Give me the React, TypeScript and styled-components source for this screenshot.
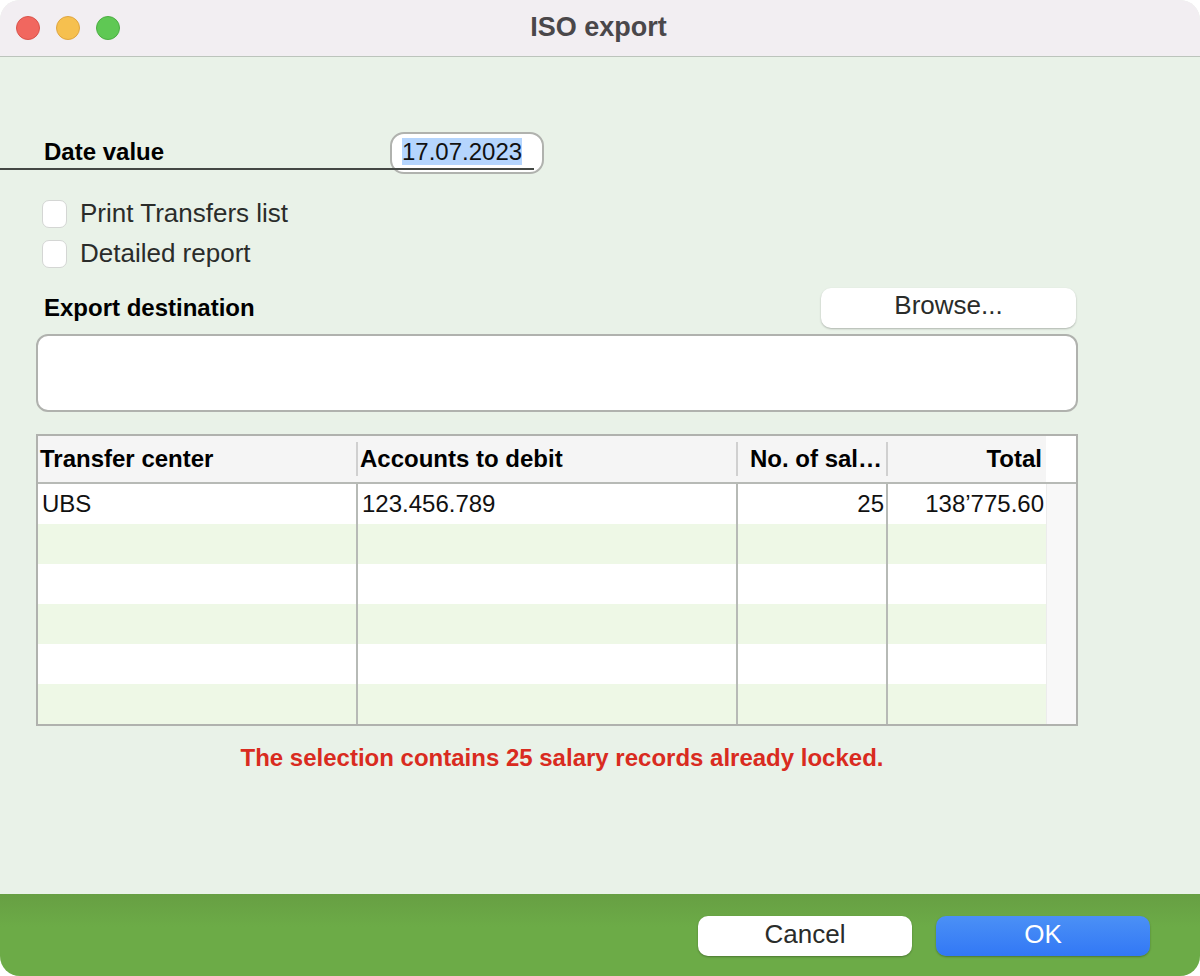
import React from "react";
import styled, { createGlobalStyle } from "styled-components";

const Global = createGlobalStyle`
  html, body { margin: 0; padding: 0; background: #fff; }
  body { font-family: "Liberation Sans", Arial, sans-serif; }
`;

const Win = styled.div`
  width: 1200px;
  height: 976px;
  display: flex;
  flex-direction: column;
  border-radius: 20px;
  overflow: hidden;
  background: #e9f2e8;
`;

const TitleBar = styled.header`
  height: 56px;
  flex: none;
  display: flex;
  align-items: center;
  position: relative;
  padding-left: 16px;
  gap: 16px;
  background: #f2eef2;
  border-bottom: 1px solid #bcc4bc;
`;

const Light = styled.span<{ $bg: string; $edge: string }>`
  width: 24px;
  height: 24px;
  box-sizing: border-box;
  border-radius: 50%;
  background: ${(p) => p.$bg};
  border: 1px solid ${(p) => p.$edge};
`;

const Title = styled.h1`
  position: absolute;
  left: 0;
  right: 3px;
  top: 0;
  margin: 0;
  text-align: center;
  font: bold 27px/54px "Liberation Sans", Arial, sans-serif;
  color: #4a474a;
`;

const Body = styled.main`
  flex: 1;
  display: flex;
  flex-direction: column;
  padding-top: 76px;
`;

const DateRow = styled.div`
  width: 534px;
  height: 38px;
  display: flex;
  align-items: center;
  justify-content: space-between;
  position: relative;
  &::after {
    content: "";
    position: absolute;
    left: 0;
    right: 0;
    bottom: 1px;
    height: 2px;
    background: #444844;
  }
`;

const FieldLabel = styled.label`
  font: bold 24px/28px "Liberation Sans", Arial, sans-serif;
  color: #000;
  padding-left: 44px;
`;

const DateBox = styled.div`
  width: 154px;
  height: 42px;
  box-sizing: border-box;
  margin-right: -10px;
  margin-top: 1px;
  padding: 4px 0 0 10px;
  background: #fff;
  border: 2px solid #b0b2ae;
  border-radius: 14px;
`;

const Selected = styled.span`
  display: inline-block;
  background: #b5d5fd;
  font: 24px/27px "Liberation Sans", Arial, sans-serif;
  color: #111;
`;

const Checks = styled.div`
  display: flex;
  flex-direction: column;
  gap: 12px;
  padding: 29px 0 0 42px;
`;

const CheckRow = styled.div`
  display: flex;
  align-items: center;
  gap: 13px;
  height: 28px;
`;

const Box = styled.span`
  width: 25px;
  height: 28px;
  box-sizing: border-box;
  background: #fff;
  border: 1px solid #d4d6d4;
  border-radius: 7px;
`;

const CheckText = styled.span`
  font: 26px/28px "Liberation Sans", Arial, sans-serif;
  color: #2a2c2a;
  padding-bottom: 2px;
`;

const DestRow = styled.div`
  display: flex;
  align-items: center;
  justify-content: space-between;
  width: 1076px;
  box-sizing: border-box;
  padding: 20px 0 0 0;
`;

const Browse = styled.button`
  width: 255px;
  height: 40px;
  padding: 0 0 7px;
  border: none;
  border-radius: 10px;
  background: #fff;
  box-shadow: 0 1px 2px rgba(0, 0, 0, 0.25);
  font: 26px/28px "Liberation Sans", Arial, sans-serif;
  color: #2a2c2a;
`;

const PathBox = styled.div`
  width: 1042px;
  height: 78px;
  box-sizing: border-box;
  margin: 6px 0 0 36px;
  background: #fff;
  border: 2px solid #b0b2ae;
  border-radius: 12px;
`;

const Table = styled.div`
  width: 1042px;
  height: 292px;
  box-sizing: border-box;
  margin: 22px 0 0 36px;
  background: #fff;
  border: 2px solid #b0b2ae;
  display: flex;
  flex-direction: column;
`;

const columns = "320px 380px 150px 158px 30px";

const HeadRow = styled.div`
  height: 48px;
  box-sizing: border-box;
  flex: none;
  display: grid;
  grid-template-columns: ${columns};
  border-bottom: 2px solid #b7bab6;
`;

const HeadCell = styled.div<{ $right?: boolean; $last?: boolean }>`
  position: relative;
  box-sizing: border-box;
  min-width: 0;
  background: #f5f5f5;
  font: bold 24px/46px "Liberation Sans", Arial, sans-serif;
  color: #000;
  padding: 0 4px 0 ${(p) => (p.$right ? "12px" : "2px")};
  text-align: ${(p) => (p.$right ? "right" : "left")};
  white-space: nowrap;
  overflow: hidden;
  text-overflow: ellipsis;
  &::after {
    content: "";
    display: ${(p) => (p.$last ? "none" : "block")};
    position: absolute;
    right: 0;
    top: 6px;
    height: 34px;
    width: 2px;
    background: #d0d0d0;
  }
`;

const Corner = styled.div`
  background: #fff;
`;

const Rows = styled.div`
  flex: 1;
  display: flex;
  flex-direction: column;
`;

const Row = styled.div<{ $alt: boolean }>`
  height: 40px;
  flex: none;
  display: grid;
  grid-template-columns: ${columns};
  background: ${(p) => (p.$alt ? "#eef8e6" : "#fff")};
`;

const Cell = styled.div<{ $right?: boolean }>`
  box-sizing: border-box;
  height: 100%;
  border-right: 2px solid #b7bab6;
  font: 24px/40px "Liberation Sans", Arial, sans-serif;
  color: #111;
  padding: 0 2px 0 4px;
  text-align: ${(p) => (p.$right ? "right" : "left")};
  white-space: nowrap;
`;

const LastCell = styled(Cell)`
  border-right: none;
`;

const Scroll = styled.div`
  height: 100%;
  background: #f8f8f8;
  border-left: 1px solid #ececec;
`;

const Warning = styled.p`
  margin: 18px 0 0 36px;
  width: 1052px;
  text-align: center;
  font: bold 24px/28px "Liberation Sans", Arial, sans-serif;
  color: #d92b20;
`;

const Footer = styled.footer`
  height: 82px;
  flex: none;
  box-sizing: border-box;
  display: flex;
  justify-content: flex-end;
  align-items: flex-start;
  gap: 24px;
  padding: 22px 50px 0 0;
  background: linear-gradient(#679f43, #6cab47 40%);
`;

const Action = styled.button<{ $primary?: boolean }>`
  width: 214px;
  height: 40px;
  padding: 0 0 5px;
  border: none;
  border-radius: 10px;
  background: ${(p) => (p.$primary ? "linear-gradient(#4b90f6, #3278f5)" : "#fff")};
  box-shadow: 0 1px 2px rgba(0, 0, 0, 0.3);
  font: 26px/28px "Liberation Sans", Arial, sans-serif;
  color: ${(p) => (p.$primary ? "#fff" : "#2a2c2a")};
`;

const data = [
  ["UBS", "123.456.789", "25", "138’775.60"],
  ["", "", "", ""],
  ["", "", "", ""],
  ["", "", "", ""],
  ["", "", "", ""],
  ["", "", "", ""],
];

export default function App() {
  return (
    <Win>
      <Global />
      <TitleBar>
        <Light $bg="#f1675f" $edge="#d9534b" />
        <Light $bg="#f6c04f" $edge="#dfa540" />
        <Light $bg="#5fc854" $edge="#4cad43" />
        <Title>ISO export</Title>
      </TitleBar>
      <Body>
        <DateRow>
          <FieldLabel>Date value</FieldLabel>
          <DateBox>
            <Selected>17.07.2023</Selected>
          </DateBox>
        </DateRow>
        <Checks>
          <CheckRow>
            <Box />
            <CheckText>Print Transfers list</CheckText>
          </CheckRow>
          <CheckRow>
            <Box />
            <CheckText>Detailed report</CheckText>
          </CheckRow>
        </Checks>
        <DestRow>
          <FieldLabel>Export destination</FieldLabel>
          <Browse>Browse...</Browse>
        </DestRow>
        <PathBox />
        <Table>
          <HeadRow>
            <HeadCell>Transfer center</HeadCell>
            <HeadCell>Accounts to debit</HeadCell>
            <HeadCell $right>No. of salaries</HeadCell>
            <HeadCell $right $last>Total</HeadCell>
            <Corner />
          </HeadRow>
          <Rows>
            {data.map((r, i) => (
              <Row key={i} $alt={i % 2 === 1}>
                <Cell>{r[0]}</Cell>
                <Cell>{r[1]}</Cell>
                <Cell $right>{r[2]}</Cell>
                <LastCell $right>{r[3]}</LastCell>
                <Scroll />
              </Row>
            ))}
          </Rows>
        </Table>
        <Warning>The selection contains 25 salary records already locked.</Warning>
      </Body>
      <Footer>
        <Action>Cancel</Action>
        <Action $primary>OK</Action>
      </Footer>
    </Win>
  );
}
